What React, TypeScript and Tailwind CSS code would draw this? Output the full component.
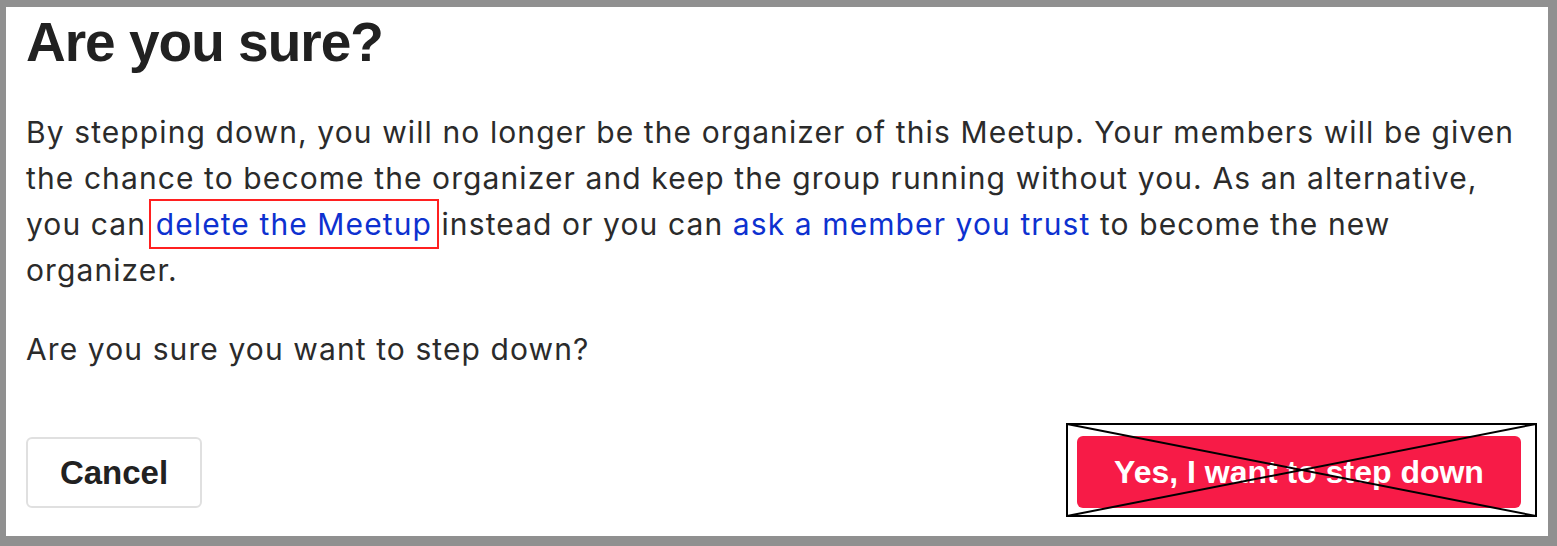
export default function App() {
  return (
    <div className="w-[1557px] h-[546px] bg-[#909090] pt-[7px] pl-[6px]">
      <div className="w-[1542px] h-[529px] bg-white flex flex-col pl-[20px] pr-[20px] pt-[7px] pb-[28px]">
        {/* Title */}
        <h1 className="font-['Liberation_Sans',Arial,sans-serif] font-bold text-[55px] leading-[56px] tracking-[-1px] text-[#212121]">
          Are you sure?
        </h1>

        {/* Body */}
        <p className="mt-[39px] font-['Inter',sans-serif] text-[30px] leading-[46px] tracking-[1.1px] text-[#2b2b2b]">
          By stepping down, you will no longer be the organizer of this Meetup. Your members will be given
          the chance to become the organizer and keep the group running without you. As an alternative,
          you can{" "}
          <a className="text-[#0d31d0] outline-2 outline-[#ff2020] outline-offset-[5px]">delete the Meetup</a>{" "}
          instead or you can <a className="text-[#0d31d0]">ask a member you trust</a> to become the new
          organizer.
        </p>
        <p className="mt-[33px] font-['Inter',sans-serif] text-[30px] leading-[46px] tracking-[1.1px] text-[#2b2b2b]">
          Are you sure you want to step down?
        </p>

        {/* Actions */}
        <div className="mt-auto pr-[7px] flex items-end justify-between">
          <button className="w-[176px] h-[71px] rounded-[6px] border-2 border-[#e0e0e0] bg-white font-['Liberation_Sans',Arial,sans-serif] font-bold text-[33px] text-[#212121]">
            Cancel
          </button>
          <div className="relative">
            <button className="w-[444px] h-[72px] rounded-[6px] bg-[#f71b47] font-['Liberation_Sans',Arial,sans-serif] font-bold text-[32px] text-white">
              Yes, I want to step down
            </button>
            <svg
              className="absolute left-[-11px] top-[-13px] w-[471px] h-[94px]"
              viewBox="0 0 471 94"
              preserveAspectRatio="none"
            >
              <rect x="1" y="1" width="469" height="92" fill="none" stroke="#000" strokeWidth="2" />
              <line x1="1" y1="1" x2="470" y2="93" stroke="#000" strokeWidth="2" />
              <line x1="470" y1="1" x2="1" y2="93" stroke="#000" strokeWidth="2" />
            </svg>
          </div>
        </div>
      </div>
    </div>
  )
}
